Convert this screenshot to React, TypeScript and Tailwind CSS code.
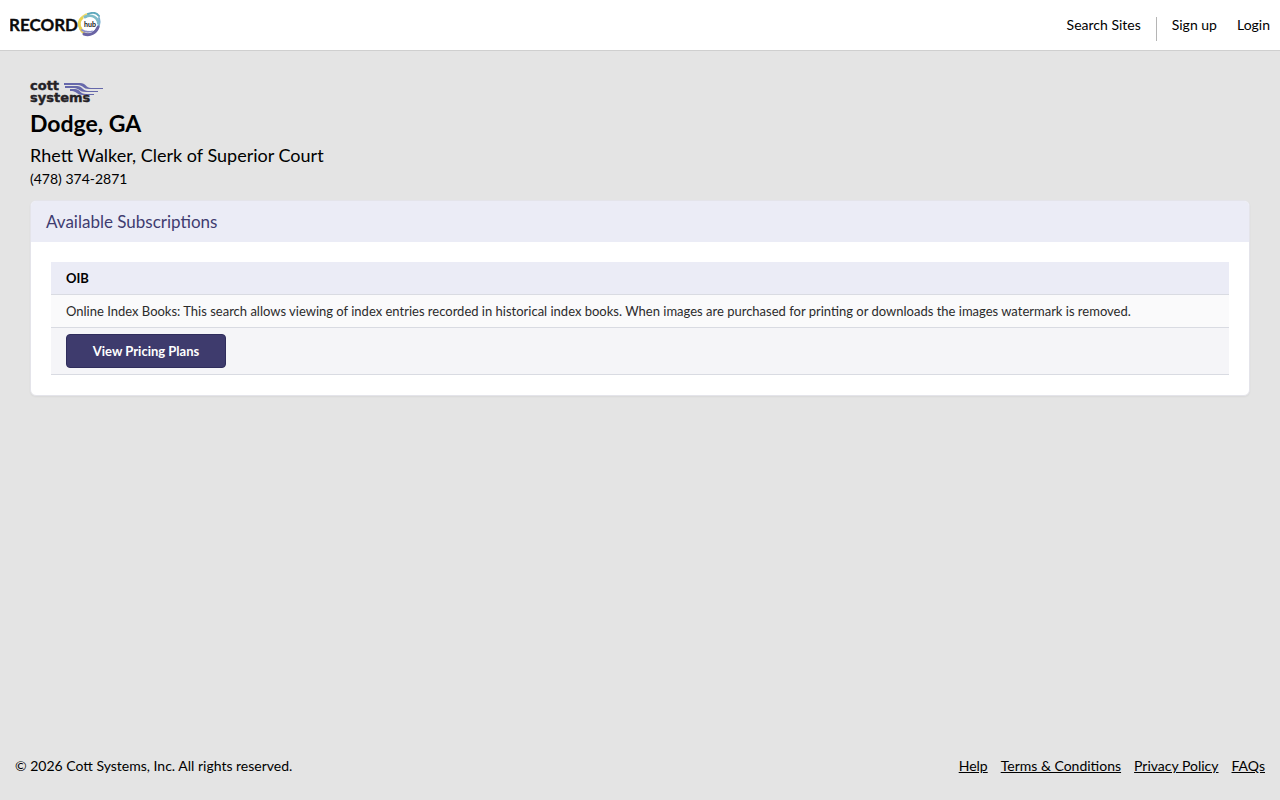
import type { ReactNode } from "react";

const footerLinks = ["Help", "Terms & Conditions", "Privacy Policy", "FAQs"];

function RecordHubLogo() {
  return (
    <svg width="92" height="26" viewBox="0 0 92 26" role="img" aria-label="RECORDhub">
      <text
        x="-1"
        y="19"
        fontSize="17"
        fontWeight="700"
        fill="#0b0b0b"
        stroke="#0b0b0b"
        strokeWidth="0.3"
        fontFamily="Lato, sans-serif"
      >
        RECORD
      </text>
      <g fill="none" strokeLinecap="round">
        <path d="M70 9C71 5 75 2 79 2" stroke="#f0dc6a" strokeWidth="2" />
        <path d="M71 17C68 13 69 8 72 6" stroke="#ead24f" strokeWidth="3" />
        <path d="M70 16C71 20 74 22 78 22" stroke="#e6cf55" strokeWidth="2" />
        <path d="M78 2C83 0 87 1 89 4" stroke="#5fa9bd" strokeWidth="2" />
        <path d="M75 5C82 2 88 6 88 11" stroke="#7fbcc8" strokeWidth="3" />
        <path d="M89 6C91 12 88 18 84 20" stroke="#7fb0d0" strokeWidth="2" />
        <path d="M88 15C86 21 80 24 74 22" stroke="#6a64a4" strokeWidth="3" />
        <path d="M72 18C75 20 79 20 82 19" stroke="#8d8fc6" strokeWidth="2" />
      </g>
      <circle cx="80" cy="12" r="7" fill="#fff" />
      <text x="74" y="15" fontSize="7" fontWeight="700" fill="#151515" fontFamily="Lato, sans-serif">
        hub
      </text>
    </svg>
  );
}

function CottLogo() {
  return (
    <svg
      width="75"
      height="24"
      viewBox="0 0 75 24"
      className="overflow-visible"
      role="img"
      aria-label="Cott Systems"
    >
      <g fill="#6668ab">
        <path d="M34 2H50C56 2 56 7 61 7H73V8H59C53 8 53 4 48 4H34Z" />
        <path d="M35 5H47C52 5 53 10 58 10H68V11H56C49 11 49 7 44 7H35Z" />
        <path d="M40 8H45C50 8 50 13 56 13H64V14H53C47 14 46 10 42 10H40Z" />
      </g>
      <g
        fill="#242226"
        stroke="#242226"
        strokeWidth="0.4"
        fontFamily="'DejaVu Sans', sans-serif"
        fontWeight="700"
        fontSize="13"
      >
        <text x="0" y="9">cott</text>
        <text x="0" y="21">systems</text>
      </g>
    </svg>
  );
}

function NavLink({ children }: { children: ReactNode }) {
  return (
    <a href="#" className="hover:underline">
      {children}
    </a>
  );
}

export default function App() {
  return (
    <div className="flex min-h-screen flex-col bg-[#e4e4e4] font-[Lato,sans-serif] text-sm text-black">
      <header className="flex items-center justify-between border-b border-[#cfcfcf] bg-white px-[10px] py-[10px]">
        <a href="#">
          <RecordHubLogo />
        </a>
        <nav className="flex h-[30px] items-center">
          <NavLink>Search Sites</NavLink>
          <span className="mx-[15px] mt-2 h-6 w-px bg-[#b5b5b5]" />
          <div className="flex gap-5">
            <NavLink>Sign up</NavLink>
            <NavLink>Login</NavLink>
          </div>
        </nav>
      </header>

      <main className="flex-1 px-[30px] pt-[30px]">
        <CottLogo />
        <h1 className="mt-[2px] text-[23px] leading-8 font-bold">Dodge, GA</h1>
        <p className="mt-[2px] text-lg leading-7">Rhett Walker, Clerk of Superior Court</p>
        <p className="leading-5">(478) 374-2871</p>

        <section className="mt-[11px] overflow-hidden rounded-md border border-[#e4e4ea] bg-white shadow-xs">
          <h2 className="bg-[#ebecf6] px-[15px] pt-[9px] pb-2 text-[17px] leading-6 text-[#3f3c70]">
            Available Subscriptions
          </h2>
          <div className="p-5">
            <table className="w-full border-collapse text-left text-[13px] leading-5">
              <thead>
                <tr className="border-b border-[#d9dbe2] bg-[#ebecf6]">
                  <th className="px-[15px] py-[6px] font-bold">OIB</th>
                </tr>
              </thead>
              <tbody>
                <tr className="border-b border-[#d9dbe2] bg-[#fafafb] text-[#2b2b2b]">
                  <td className="px-[15px] py-[6px]">
                    Online Index Books: This search allows viewing of index entries recorded in historical index
                    books. When images are purchased for printing or downloads the images watermark is removed.
                  </td>
                </tr>
                <tr className="border-b border-[#d9dbe2] bg-[#f5f5f8]">
                  <td className="px-[15px] py-[6px]">
                    <button
                      type="button"
                      className="block h-[34px] w-40 rounded-sm border border-[#2f2d5c] bg-[#3e3b6d] font-bold text-white"
                    >
                      View Pricing Plans
                    </button>
                  </td>
                </tr>
              </tbody>
            </table>
          </div>
        </section>
      </main>

      <footer className="flex items-center justify-between px-[15px] pt-5 pb-6">
        <p>© 2026 Cott Systems, Inc. All rights reserved.</p>
        <nav className="flex gap-[13px]">
          {footerLinks.map((label) => (
            <a key={label} href="#" className="underline">
              {label}
            </a>
          ))}
        </nav>
      </footer>
    </div>
  );
}
